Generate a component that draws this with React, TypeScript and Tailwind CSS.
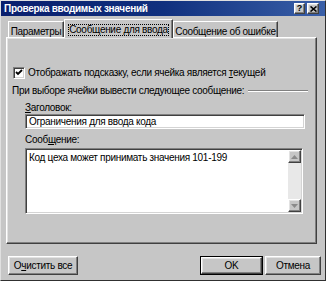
import React from "react";

const font = { fontFamily: '"Liberation Sans", Arial, sans-serif' };

function Bevel({ className = "", children }: { className?: string; children?: React.ReactNode }) {
  return (
    <div
      className={`border border-t-white border-l-white border-b-[#404040] border-r-[#404040] shadow-[inset_-1px_-1px_#808080,inset_1px_1px_#e2e2e2] bg-[#c6c6c6] ${className}`}
    >
      {children}
    </div>
  );
}

function Sunken({ className = "", children }: { className?: string; children?: React.ReactNode }) {
  return (
    <div
      className={`border border-t-[#808080] border-l-[#808080] border-b-white border-r-white shadow-[inset_1px_1px_#404040,inset_-1px_-1px_#d4d4d4] bg-white ${className}`}
    >
      {children}
    </div>
  );
}

function Arrow({ up }: { up?: boolean }) {
  return (
    <svg width="7" height="4" viewBox="0 0 7 4">
      <path d={up ? "M3.5 0 L7 4 L0 4 Z" : "M0 0 L7 0 L3.5 4 Z"} fill="#8a8a8a" />
    </svg>
  );
}

function Tab({ label, active, w }: { label: string; active?: boolean; w: string }) {
  if (active) {
    return (
      <div className={`relative z-10 -mb-px h-[19px] border-t border-l border-t-white border-l-white border-r border-r-[#404040] shadow-[inset_-1px_0_#808080] bg-[#c6c6c6] px-[3px] pt-[4px] whitespace-nowrap ${w}`}>
        <span className="block border border-dotted border-black text-center leading-[10px]">{label}</span>
      </div>
    );
  }
  return (
    <div className={`h-[16px] border-t border-l border-t-white border-l-white border-r border-r-[#404040] shadow-[inset_-1px_0_#808080] pt-[5px] text-center leading-[10px] whitespace-nowrap ${w}`}>
      {label}
    </div>
  );
}

function Button({ label, def, className = "" }: { label: React.ReactNode; def?: boolean; className?: string }) {
  const inner = (
    <Bevel className="h-full flex items-center justify-center whitespace-nowrap">{label}</Bevel>
  );
  if (def) return <div className={`border border-black h-[19px] ${className}`}>{inner}</div>;
  return <div className={`h-[19px] ${className}`}>{inner}</div>;
}

export default function App() {
  return (
    <div
      style={font}
      className="w-[326px] h-[281px] bg-[#c6c6c6] text-[10px] tracking-[-0.3px] text-black border border-t-[#e0e0e0] border-l-[#e0e0e0] border-b-[#303030] border-r-[#303030] flex flex-col overflow-hidden"
    >
      <div className="h-[15px] shrink-0 flex items-center justify-between bg-gradient-to-r from-[#0a1f6e] via-[#10307e] to-[#3a5fa8] pl-[3px] pr-[6px]">
        <span className="text-white font-bold text-[10px] tracking-[-0.3px] leading-none">Проверка вводимых значений</span>
        <div className="flex gap-[2px]">
          <Bevel className="w-[11px] h-[11px] flex items-center justify-center font-bold text-[9px] leading-none tracking-normal">?</Bevel>
          <Bevel className="w-[12px] h-[11px] flex items-center justify-center">
            <svg width="7" height="6" viewBox="0 0 7 6">
              <path d="M0.5 0.5 L6.5 5.5 M6.5 0.5 L0.5 5.5" stroke="black" strokeWidth="1.6" />
            </svg>
          </Bevel>
        </div>
      </div>

      <div className="pl-[5px] pt-[3px]">
        <div className="flex items-end pl-[2px]">
          <Tab label="Параметры" w="w-[56px]" />
          <Tab label="Сообщение для ввода" active w="w-[109px]" />
          <Tab label="Сообщение об ошибке" w="w-[105px]" />
        </div>
        <Bevel className="h-[207px] w-[311px] px-[5px] pt-[28px]">
          <div className="flex items-center h-[13px] gap-[3px] pl-[1px]">
            <Sunken className="w-[12px] h-[12px] flex items-center justify-center">
              <svg width="8" height="7" viewBox="0 0 8 7">
                <path d="M1 3 L3 5 L7 1" stroke="black" strokeWidth="1.8" fill="none" />
              </svg>
            </Sunken>
            <span className="leading-[13px]">
              Отображать подсказку, если ячейка является <span className="underline">т</span>екущей
            </span>
          </div>
          <div className="flex items-center gap-[4px] mt-[5px] h-[13px] pr-[3px]">
            <span className="whitespace-nowrap leading-[13px]">При выборе ячейки вывести следующее сообщение:</span>
            <div className="flex-1 border-t border-t-[#808080] border-b border-b-white" />
          </div>
          <div className="pl-[13px] pr-[6px] mt-[4px]">
            <div className="leading-[13px]">
              <span className="underline">З</span>аголовок:
            </div>
            <Sunken className="h-[15px] pl-[3px] leading-[13px]">Ограничения для ввода кода</Sunken>
            <div className="mt-[4px] leading-[13px]">
              Сооб<span className="underline">щ</span>ение:
            </div>
            <Sunken className="h-[66px] mt-[2px] mr-[2px] flex">
              <div className="flex-1 pl-[3px] pt-[2px] leading-[13px]">Код цеха может принимать значения 101-199</div>
              <div className="w-[13px] flex flex-col justify-between bg-[#e8e8e8] mt-[1px] mb-[1px] mr-[1px]">
                <Bevel className="h-[13px] flex items-center justify-center">
                  <Arrow up />
                </Bevel>
                <Bevel className="h-[13px] flex items-center justify-center">
                  <Arrow />
                </Bevel>
              </div>
            </Sunken>
          </div>
        </Bevel>
        <div className="flex items-center mt-[12px] pl-[2px] pr-[4px]">
          <Button
            className="w-[70px]"
            label={
              <span>
                О<span className="underline">ч</span>истить все
              </span>
            }
          />
          <div className="flex-1" />
          <Button def className="w-[63px]" label="OK" />
          <Button className="w-[56px] ml-[2px]" label="Отмена" />
        </div>
      </div>
    </div>
  );
}
